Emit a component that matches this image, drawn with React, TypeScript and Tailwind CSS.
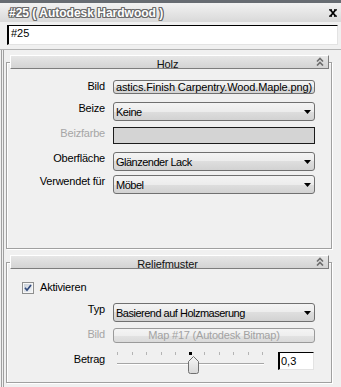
import React from "react";

function Label({ children, disabled }: { children: React.ReactNode; disabled?: boolean }) {
  return (
    <div
      className={
        disabled
          ? "w-[98px] shrink-0 text-right text-[11px] leading-[13px] tracking-[-0.2px] text-[#a6a6a6]"
          : "w-[98px] shrink-0 text-right text-[11px] leading-[13px] tracking-[-0.2px] text-black"
      }
    >
      {children}
    </div>
  );
}

function Combo({ text }: { text: string }) {
  return (
    <div className="ml-[8px] w-[202px] h-[19px] shrink-0 rounded-[3px] border border-[#707070] bg-[linear-gradient(to_bottom,#f4f4f4_0%,#ececec_50%,#dedede_50%,#d2d2d2_100%)] flex items-center pl-[2px] pr-[3px] pt-[2px]">
      <span className="flex-1 whitespace-nowrap text-[11px] leading-[13px] tracking-[-0.5px] text-black">{text}</span>
      <svg width="7" height="4" viewBox="0 0 7 4" className="mb-[1px]">
        <path d="M0 0H7L3.5 4Z" fill="#000" />
      </svg>
    </div>
  );
}

function Header({ title }: { title: string }) {
  return (
    <div className="relative z-10 ml-[4px] w-[319px] h-[14px] flex items-start border-t border-l border-t-white border-l-white border-r border-b border-r-[#7d7d7d] border-b-[#7d7d7d] bg-[linear-gradient(to_bottom,#e6e6e6,#d3d3d3)]">
      <div className="flex-1" />
      <span className="mt-[2px] text-[11px] leading-[12px] tracking-[-0.1px] text-[#111]">{title}</span>
      <div className="flex-1 flex justify-end pr-[4px] pt-[1px]">
        <svg width="8" height="9" viewBox="0 0 8 9">
          <path d="M1 4.5L4 1.5L7 4.5M1 8.5L4 5.5L7 8.5" stroke="#6e6e6e" strokeWidth="1.7" fill="none" />
        </svg>
      </div>
    </div>
  );
}

export default function App() {
  const ticks = Array.from({ length: 11 }, (_, i) => i);
  return (
    <div className="w-[341px] h-[387px] overflow-hidden bg-[#f0f0f0] flex flex-col font-['Liberation_Sans',Arial,sans-serif]">
      <div className="h-[3px] shrink-0 bg-[#676c72]" />
      {/* title bar */}
      <div className="h-[19px] shrink-0 flex items-start pl-[9px] pr-[3px] pt-[3px] bg-[linear-gradient(to_bottom,#f2f2f2,#d9d9d9)]">
        <span className="flex-1 text-[12px] leading-[14px] font-bold text-white [text-shadow:1px_0_0_#6a6a6a,-1px_0_0_#6a6a6a,0_1px_0_#6a6a6a,0_-1px_0_#6a6a6a,1px_1px_0_#6a6a6a,-1px_-1px_0_#6a6a6a,1px_-1px_0_#6a6a6a,-1px_1px_0_#6a6a6a]">
          #25 ( Autodesk Hardwood )
        </span>
        <svg width="8" height="8" viewBox="0 0 8 8" className="mt-[3px] mr-[1px]">
          <path d="M1.5 1L6.5 7M6.5 1L1.5 7" stroke="#000" strokeWidth="1.8" />
          <path d="M0 0.8H3M5 0.8H8M0 7.2H3M5 7.2H8" stroke="#000" strokeWidth="1.2" />
        </svg>
      </div>
      {/* name field */}
      <div className="pl-[7px] pt-[3px] shrink-0">
        <div className="w-[331px] h-[20px] bg-white border-t border-l-2 border-r border-b border-t-black border-l-black border-r-[#e3e3e3] border-b-[#e3e3e3] pl-[2px] pt-[1px] text-[11px] leading-[13px] text-black">
          #25
        </div>
      </div>
      {/* panel */}
      <div className="mt-[4px] flex flex-1 border-t border-[#b4b4b4]">
        <div className="ml-[1px] w-[3px] border-l border-r border-[#a0a0a0]" />
        <div className="pl-[2px] pt-[5px] flex flex-col">
          {/* Holz */}
          <Header title="Holz" />
          <div className="-mt-[7px] w-[326px] h-[187px] border border-[#a0a0a0] shadow-[1px_1px_0_#fff,inset_1px_1px_0_#fff] pt-[17px] flex flex-col">
            <div className="flex items-start">
              <Label>Bild</Label>
              <div className="ml-[8px] w-[202px] h-[14px] shrink-0 rounded-[3px] border border-[#707070] bg-[linear-gradient(to_bottom,#f4f4f4_0%,#ececec_50%,#dedede_50%,#d2d2d2_100%)] overflow-hidden flex justify-end items-center pr-[2px]">
                <span className="whitespace-nowrap text-[11px] leading-[13px] tracking-[-0.12px] text-black">
                  astics.Finish Carpentry.Wood.Maple.png)
                </span>
              </div>
            </div>
            <div className="mt-[8px] flex items-start">
              <Label>Beize</Label>
              <Combo text="Keine" />
            </div>
            <div className="mt-[6px] flex items-start">
              <Label disabled>Beizfarbe</Label>
              <div className="ml-[8px] w-[202px] h-[17px] shrink-0 border border-[#1c1c1c] bg-[#d4d4d4]" />
            </div>
            <div className="mt-[8px] flex items-start">
              <Label>Oberfläche</Label>
              <Combo text="Glänzender Lack" />
            </div>
            <div className="mt-[4px] flex items-start">
              <Label>Verwendet für</Label>
              <Combo text="Möbel" />
            </div>
          </div>

          {/* Reliefmuster */}
          <div className="mt-[6px]">
            <Header title="Reliefmuster" />
          </div>
          <div className="-mt-[7px] w-[326px] h-[121px] border border-[#a0a0a0] shadow-[1px_1px_0_#fff,inset_1px_1px_0_#fff] pt-[18px] flex flex-col">
            <div className="flex items-start h-[13px] pl-[15px]">
              <svg width="12" height="12" viewBox="0 0 12 12" className="mt-[1px] shrink-0">
                <defs>
                  <linearGradient id="cb" x1="0" y1="0" x2="1" y2="1">
                    <stop offset="0" stopColor="#c9d0d9" />
                    <stop offset="1" stopColor="#f2f4f6" />
                  </linearGradient>
                </defs>
                <rect x="0.5" y="0.5" width="11" height="11" fill="#f6f6f6" stroke="#8e8f8f" />
                <rect x="2" y="2" width="8" height="8" fill="url(#cb)" />
                <path d="M3 5.8L5 8.2L9 3" stroke="#30497c" strokeWidth="1.7" fill="none" />
              </svg>
              <span className="ml-[6px] text-[11px] leading-[12px] tracking-[-0.2px] text-black">Aktivieren</span>
            </div>
            <div className="mt-[9px] flex items-start">
              <Label>Typ</Label>
              <Combo text="Basierend auf Holzmaserung" />
            </div>
            <div className="mt-[6px] flex items-start">
              <Label disabled>Bild</Label>
              <div className="ml-[8px] w-[202px] h-[15px] shrink-0 rounded-[3px] border border-[#9a9a9a] bg-[linear-gradient(to_bottom,#f4f4f4_0%,#eeeeee_50%,#e3e3e3_50%,#dadada_100%)] flex justify-center items-center">
                <span className="whitespace-nowrap text-[11px] leading-[13px] tracking-[-0.2px] text-[#a2a2a2]">Map #17 (Autodesk Bitmap)</span>
              </div>
            </div>
            <div className="mt-[7px] flex items-start h-[23px]">
              <div className="pt-[3px]">
                <Label>Betrag</Label>
              </div>
              <div className="ml-[8px] w-[158px] h-[23px] shrink-0 relative flex flex-col">
                <div className="mt-[2px] ml-[4px] w-[146px] h-[3px] flex justify-between">
                  {ticks.map((t) => (
                    <div key={t} className="w-[1px] h-[3px] bg-[#b4b4b4]" />
                  ))}
                </div>
                <div className="mt-[8px] ml-[4px] w-[147px] h-[2px] border-t border-[#a6a6a6] border-b border-b-white" />
                <div className="absolute left-[76px] top-[2px] w-[3px] h-[3px] bg-black" />
                <svg width="11" height="18" viewBox="0 0 11 18" className="absolute left-[75px] top-[6px]">
                  <defs>
                    <linearGradient id="th" x1="0" y1="0" x2="0" y2="1">
                      <stop offset="0" stopColor="#f6f6f6" />
                      <stop offset="1" stopColor="#d8d8d8" />
                    </linearGradient>
                  </defs>
                  <path d="M0.5 5.5L5.5 0.5L10.5 5.5V15.5Q10.5 17.5 8.5 17.5H2.5Q0.5 17.5 0.5 15.5Z" fill="url(#th)" stroke="#707070" />
                </svg>
              </div>
              <div className="ml-[7px] mt-[2px] w-[36px] h-[18px] shrink-0 bg-white border-t border-l-2 border-r border-b border-t-black border-l-black border-r-[#e3e3e3] border-b-[#e3e3e3] pl-[1px] pt-[2px] text-[11px] leading-[13px] text-black">
                0,3
              </div>
            </div>
          </div>
        </div>
      </div>
    </div>
  );
}
